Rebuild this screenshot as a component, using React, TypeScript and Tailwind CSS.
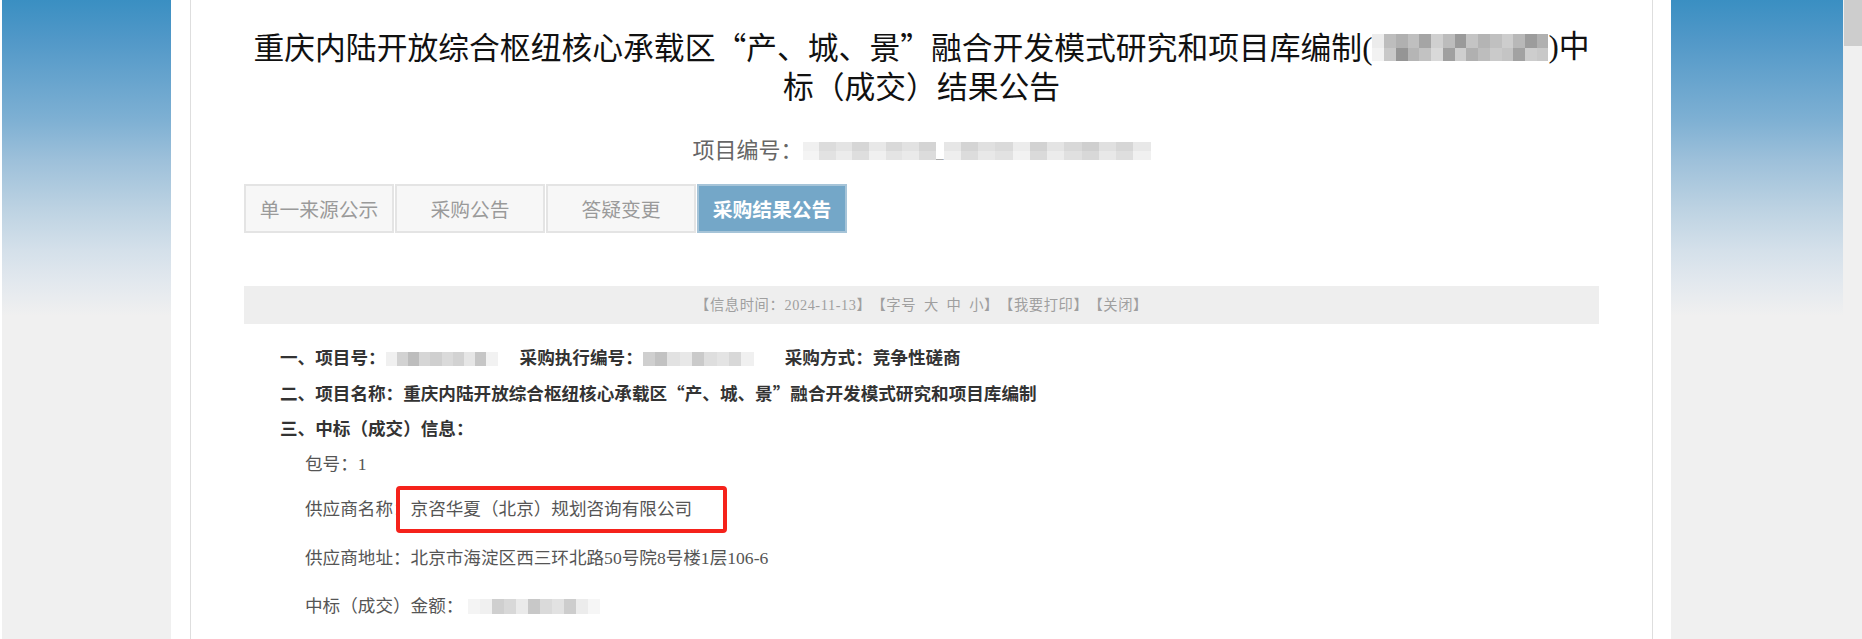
import React from 'react';

// serif stack for latin digits / brackets, CJK falls through to Noto
const SERIF = "[font-family:'Liberation_Serif','Noto_Sans_CJK_SC',serif]";
const CJK = "[font-family:'Noto_Sans_CJK_SC',sans-serif]";

type MosaicProps = {
  top: string[];
  bottom?: string[];
  w: number;
  h: number;
  className?: string;
};

// pixelated redaction block (the source page blurs ids and numbers)
function Mosaic({ top, bottom, w, h, className = '' }: MosaicProps) {
  const rows = bottom ? [top, bottom] : [top];
  return (
    <span className={`flex flex-col shrink-0 blur-[0.5px] ${className}`} style={{ width: w, height: h }}>
      {rows.map((row, i) => (
        <span key={i} className="flex flex-1">
          {row.map((c, j) => (
            <span key={j} className="flex-1" style={{ backgroundColor: c }} />
          ))}
        </span>
      ))}
    </span>
  );
}

function Q({ c }: { c: string }) {
  return <span className={`${CJK} leading-none`}>{c}</span>;
}

const tabs = ['单一来源公示', '采购公告', '答疑变更', '采购结果公告'];

const SidePanel = ({ w }: { w: string }) => (
  <div
    className={`${w} h-full shrink-0 bg-[#f0f0f0] bg-[linear-gradient(to_bottom,#3a8fc2_0px,#5198c8_40px,#7eb0d3_120px,#9dc0da_160px,#bcd2e2_208px,#d4e0ea_250px,#e2e8ee_281px,#f0f0f0_316px)] bg-no-repeat`}
  />
);

export default function App() {
  return (
    <div
      lang="zh-CN"
      className={`flex w-[1862px] h-[639px] overflow-hidden bg-white [text-spacing-trim:space-all] ${SERIF}`}
    >
      <div className="w-[2px] shrink-0 bg-white" />
      <SidePanel w="w-[169px]" />
      <div className="w-[19px] shrink-0 bg-white" />

      {/* main article column */}
      <div className="w-[1463px] shrink-0 h-full border-x border-[#dedede] bg-white px-[53px]">
        <h1 className="pt-[27px] text-[30.8px] font-normal text-[#111]">
          <div className="h-[41px] flex items-center justify-center whitespace-nowrap">
            <span className="leading-none">
              重庆内陆开放综合枢纽核心承载区<Q c="“" />产、城、景<Q c="”" />融合开发模式研究和项目库编制(
            </span>
            <Mosaic
              w={176}
              h={27}
              top={['#ececec', '#bdbdbd', '#b0b0b0', '#bfbfbf', '#a5a5a5', '#d0d0d0', '#bcbcbc', '#9a9a9a', '#c4c4c4', '#b4b4b4', '#c0c0c0', '#cdcdcd', '#b8b8b8', '#9c9c9c', '#b0b0b0']}
              bottom={['#f2f2f2', '#c8c8c8', '#959595', '#b5b5b5', '#c2c2c2', '#d9d9d9', '#a0a0a0', '#cecece', '#b0b0b0', '#bdbdbd', '#cacaca', '#c4c4c4', '#a2a2a2', '#cdcdcd', '#c8c8c8']}
            />
            <span className="leading-none">)中</span>
          </div>
          <div className="h-[41px] flex items-center justify-center">
            <span className="leading-none">标（成交）结果公告</span>
          </div>
        </h1>

        <div className="mt-[27px] h-[30px] flex items-center justify-center text-[22px] text-[#666]">
          <span className="leading-none">项目编号：</span>
          <Mosaic
            w={133}
            h={18}
            top={['#f0f0f0', '#dcdcdc', '#e4e4e4', '#d6d6d6', '#e8e8e8', '#d9d9d9', '#e2e2e2', '#d4d4d4']}
            bottom={['#f4f4f4', '#e2e2e2', '#ececec', '#dedede', '#f0f0f0', '#e4e4e4', '#eaeaea', '#dcdcdc']}
          />
          <span className="leading-none self-end mb-[5px] text-[#aaa] text-[16px]">_</span>
          <Mosaic
            w={207}
            h={18}
            top={['#e6e6e6', '#d4d4d4', '#e0e0e0', '#dadada', '#ececec', '#d2d2d2', '#e4e4e4', '#d8d8d8', '#cfcfcf', '#e0e0e0', '#d6d6d6', '#e8e8e8']}
            bottom={['#eeeeee', '#dcdcdc', '#e8e8e8', '#e2e2e2', '#f2f2f2', '#dadada', '#ececec', '#e0e0e0', '#d8d8d8', '#e8e8e8', '#dedede', '#f0f0f0']}
          />
        </div>

        <div className="mt-[18px] flex gap-[1px]">
          {tabs.map((t, i) => {
            const active = i === tabs.length - 1;
            return (
              <div
                key={t}
                className={
                  active
                    ? `w-[150px] h-[49px] flex items-center justify-center border-2 border-[#a6c4d8] bg-[#74a7c8] text-white font-bold text-[19.8px] leading-none ${CJK}`
                    : `w-[150px] h-[49px] flex items-center justify-center border-2 border-[#e4e4e4] bg-[#f7f7f7] text-[#9a9a9a] text-[19.8px] leading-none ${CJK}`
                }
              >
                {t}
              </div>
            );
          })}
        </div>

        <div className="mt-[53px] h-[38px] flex items-center justify-center bg-[#eeeeee] text-[14.3px] leading-none tracking-[0.6px] text-[#9f9f9f]">
          <span>【信息时间：2024-11-13】【字号{'\u2002'}大{'\u2002'}中{'\u2002'}小】【我要打印】【关闭】</span>
        </div>

        <div className="mt-[17px] pl-[36px] text-[17.6px] leading-none">
          <div className="h-[35.5px] flex items-center font-bold text-[#333] whitespace-nowrap">
            <span>一、项目号：</span>
            <Mosaic
              w={112}
              h={14}
              top={['#f0f0f0', '#d2d2d2', '#bdbdbd', '#d6d6d6', '#cfcfcf', '#dadada', '#d2d2d2', '#e6e6e6', '#c6c6c6', '#f2f2f2']}
            />
            <span className="ml-[22px]">采购执行编号：</span>
            <Mosaic
              w={111}
              h={14}
              top={['#cfcfcf', '#c2c2c2', '#e2e2e2', '#e8e8e8', '#cacaca', '#dedede', '#e4e4e4', '#d8d8d8', '#f0f0f0']}
            />
            <span className="ml-[31px]">采购方式：竞争性磋商</span>
          </div>
          <div className="h-[35.5px] flex items-center font-bold text-[#333] whitespace-nowrap">
            <span>
              二、项目名称：重庆内陆开放综合枢纽核心承载区<Q c="“" />产、城、景<Q c="”" />融合开发模式研究和项目库编制
            </span>
          </div>
          <div className="h-[35.5px] flex items-center font-bold text-[#333]">
            <span>三、中标（成交）信息：</span>
          </div>

          <div className="pl-[25px] text-[#555]">
            <div className="h-[35.5px] flex items-center">
              <span>包号：1</span>
            </div>
            <div className="relative mt-[3px] h-[47px] flex items-center">
              <span>供应商名称：京咨华夏（北京）规划咨询有限公司</span>
              <div className="absolute left-[91px] top-0 w-[331px] h-[47px] border-4 border-[#f5221b] rounded-[4px]" />
            </div>
            <div className="mt-[2px] h-[48px] flex items-center whitespace-nowrap">
              <span>供应商地址：北京市海淀区西三环北路50号院8号楼1层106-6</span>
            </div>
            <div className="h-[47px] flex items-center">
              <span>中标（成交）金额：</span>
              <Mosaic
                w={132}
                h={15}
                className="ml-[5px]"
                top={['#f4f4f4', '#f0f0f0', '#cfcfcf', '#d8d8d8', '#eaeaea', '#c8c8c8', '#dadada', '#e2e2e2', '#cdcdcd', '#ececec', '#f6f6f6']}
              />
            </div>
          </div>
        </div>
      </div>

      <div className="w-[18px] shrink-0 bg-white" />
      <SidePanel w="w-[172px]" />

      {/* browser scrollbar */}
      <div className="w-[19px] shrink-0 h-full bg-[#f0f0f0] pl-[1px]">
        <div className="h-[46px] bg-[#cdcdcd]" />
      </div>
    </div>
  );
}
